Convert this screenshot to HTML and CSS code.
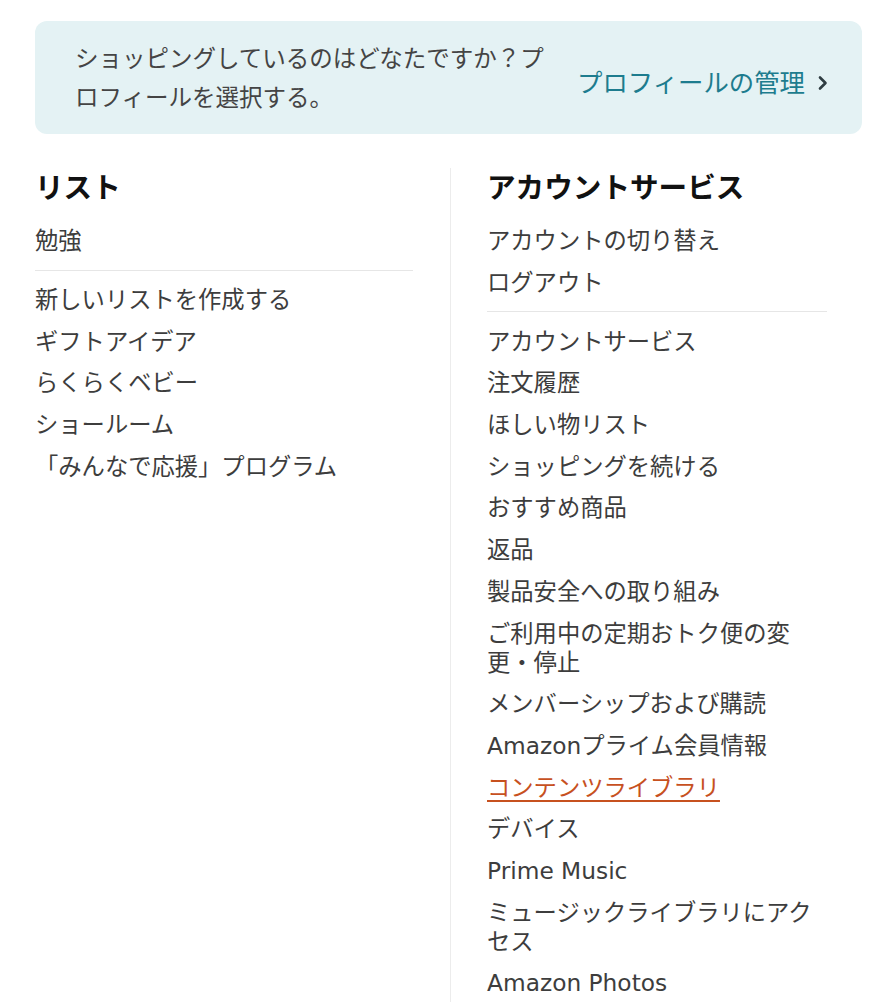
FILE: index.html
```html
<!DOCTYPE html>
<html lang="ja">
<head>
<meta charset="utf-8">
<title>メニュー</title>
<link rel="stylesheet" href="styles.css">
</head>
<body>
<div class="page">
  <div class="banner">
    <p class="banner-text">ショッピングしているのはどなたですか？プロフィールを選択する。</p>
    <a class="banner-link" href="#">プロフィールの管理<svg class="chev" width="12" height="16" viewBox="0 0 12 16"><path d="M3 2.5 L8.5 8 L3 13.5" fill="none" stroke="#2f3d42" stroke-width="2.6" stroke-linecap="round" stroke-linejoin="round"/></svg></a>
  </div>
  <div class="columns">
    <section class="col col-left">
      <h2 class="col-title">リスト</h2>
      <ul class="menu">
        <li>勉強</li>
      </ul>
      <hr class="sep">
      <ul class="menu">
        <li>新しいリストを作成する</li>
        <li>ギフトアイデア</li>
        <li>らくらくベビー</li>
        <li>ショールーム</li>
        <li>「みんなで応援」プログラム</li>
      </ul>
    </section>
    <section class="col col-right">
      <h2 class="col-title">アカウントサービス</h2>
      <ul class="menu">
        <li>アカウントの切り替え</li>
        <li>ログアウト</li>
      </ul>
      <hr class="sep">
      <ul class="menu">
        <li>アカウントサービス</li>
        <li>注文履歴</li>
        <li>ほしい物リスト</li>
        <li>ショッピングを続ける</li>
        <li>おすすめ商品</li>
        <li>返品</li>
        <li>製品安全への取り組み</li>
        <li>ご利用中の定期おトク便の変更・停止</li>
        <li>メンバーシップおよび購読</li>
        <li>Amazonプライム会員情報</li>
        <li><a class="hot" href="#">コンテンツライブラリ</a></li>
        <li>デバイス</li>
        <li>Prime Music</li>
        <li>ミュージックライブラリにアクセス</li>
        <li>Amazon Photos</li>
      </ul>
    </section>
  </div>
</div>
</body>
</html>
```

FILE: styles.css
```css
html, body {
  margin: 0;
  padding: 0;
  background: #ffffff;
}
body {
  font-family: "DejaVu Sans", "Noto Sans CJK JP", sans-serif;
  color: #3d3d3d;
  height: 1002px;
  overflow: hidden;
}
.page {
  padding: 21px 18px 0 35px;
}
.banner {
  display: flex;
  align-items: center;
  justify-content: space-between;
  background: #e4f2f4;
  border-radius: 12px;
  padding: 19px 33px 16px 40px;
}
.banner-text {
  margin: 0;
  width: 484px;
  font-size: 23.5px;
  line-height: 39px;
  color: #444444;
}
.banner-link {
  display: flex;
  align-items: center;
  padding-top: 7px;
  font-size: 25.4px;
  line-height: 32px;
  color: #1d7c8e;
  text-decoration: none;
  white-space: nowrap;
}
.chev {
  margin-left: 12px;
}
.columns {
  display: flex;
  margin-top: 34px;
  height: 834px;
}
.col-left {
  width: 378px;
  margin-right: 37px;
}
.col-right {
  border-left: 1px solid #ececec;
  padding-left: 36px;
  width: 340px;
}
.col-title {
  margin: 0 0 12px;
  font-size: 28.6px;
  line-height: 40px;
  font-weight: bold;
  color: #111111;
}
.menu {
  list-style: none;
  margin: 0;
  padding: 0;
}
.menu li {
  font-size: 23.3px;
  line-height: 29px;
  padding: 6.35px 0;
  color: #3d3d3d;
}
.sep {
  border: 0;
  border-top: 1px solid #e6e6e6;
  margin: 8px 0;
  height: 0;
}
.hot {
  color: #c7511f;
  text-decoration: underline;
  text-underline-offset: 4px;
}
```
